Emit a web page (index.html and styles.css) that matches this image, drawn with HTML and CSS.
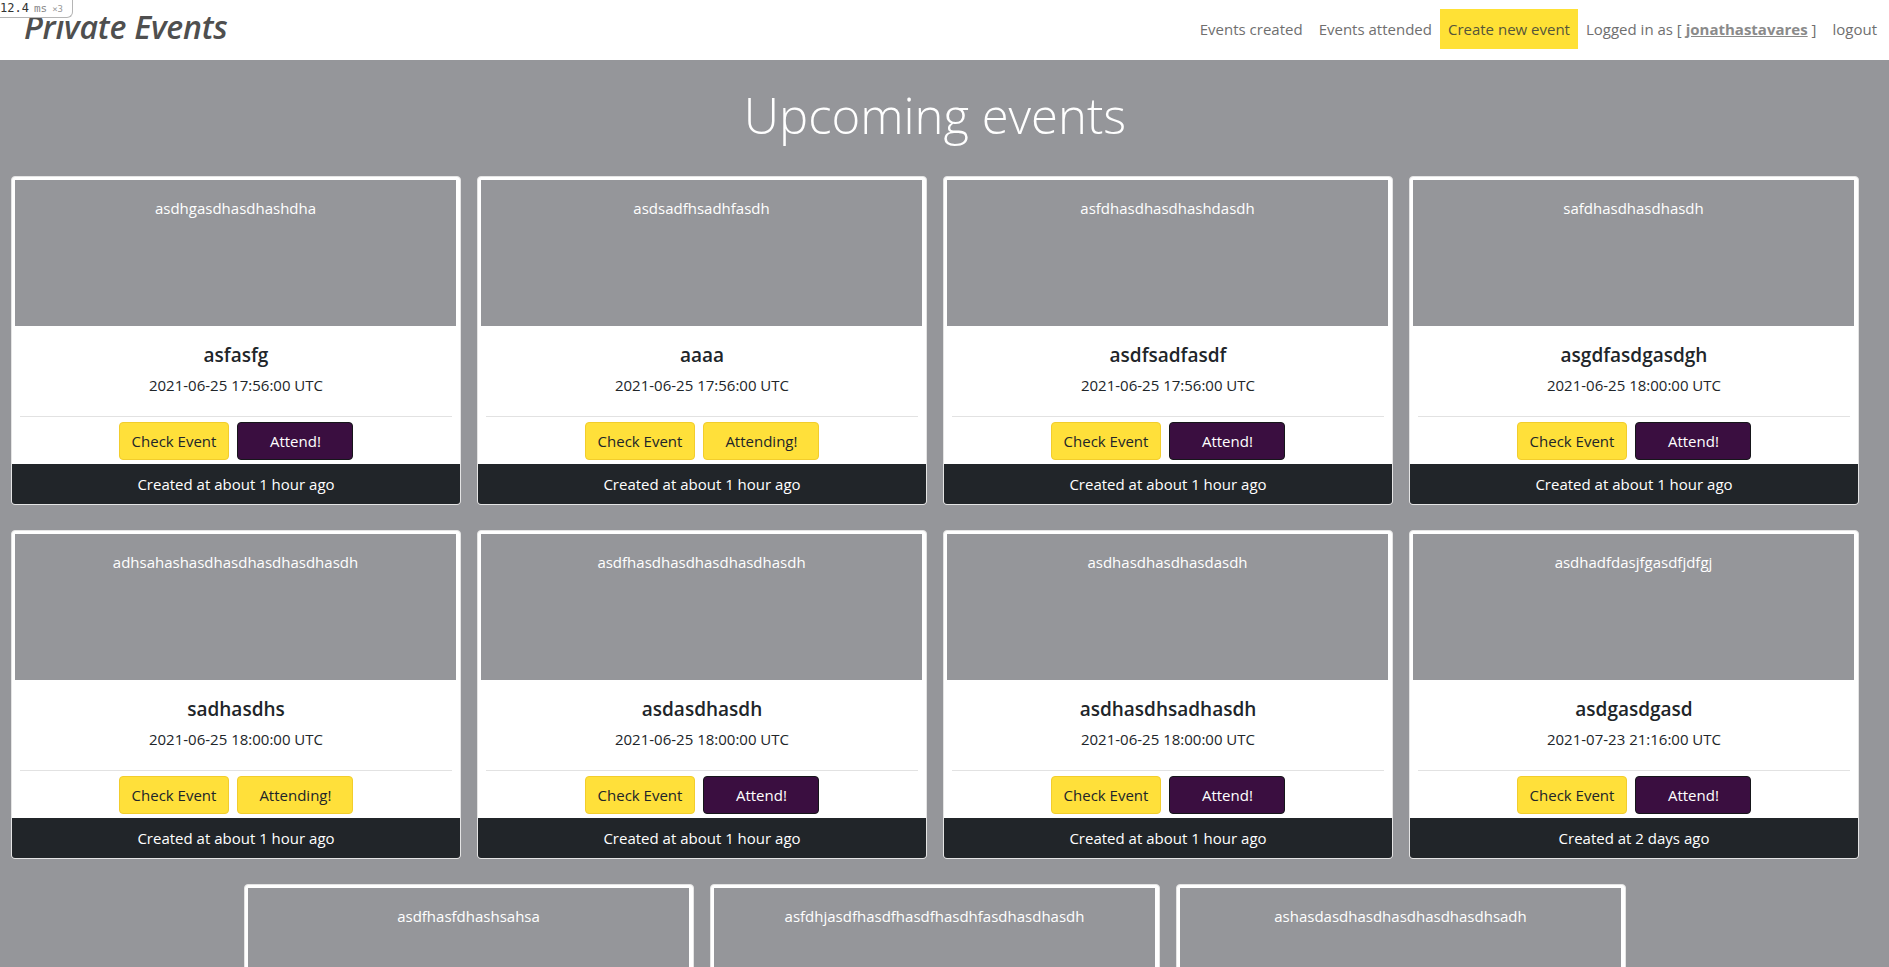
FILE: index.html
```html
<!DOCTYPE html>
<html lang="en">
<head>
<meta charset="utf-8">
<title>Private Events</title>
<link rel="stylesheet" href="styles.css">
</head>
<body>
<div class="profiler"><span class="p-num">12.4</span><span class="p-unit">ms</span><span class="p-x">×3</span></div>
<header class="navbar">
  <a class="brand" href="#">Private Events</a>
  <nav class="nav">
    <a class="nav-link" href="#">Events created</a>
    <a class="nav-link" href="#">Events attended</a>
    <a class="nav-link nav-create" href="#">Create new event</a>
    <span class="nav-link">Logged in as [ <a class="user" href="#">jonathastavares</a> ]</span>
    <a class="nav-link" href="#">logout</a>
  </nav>
</header>
<main class="main">
  <h1 class="page-title">Upcoming events</h1>
  <div class="cards">
    <article class="card">
      <div class="card-img-wrap"><div class="card-img">asdhgasdhasdhashdha</div></div>
      <div class="card-body">
        <h5 class="card-title">asfasfg</h5>
        <p class="card-date">2021-06-25 17:56:00 UTC</p>
        <hr class="card-hr">
        <div class="card-actions"><a class="btn btn-yellow" href="#">Check Event</a><a class="btn btn-wide btn-purple" href="#">Attend!</a></div>
      </div>
      <div class="card-footer">Created at about 1 hour ago</div>
    </article>
    <article class="card">
      <div class="card-img-wrap"><div class="card-img">asdsadfhsadhfasdh</div></div>
      <div class="card-body">
        <h5 class="card-title">aaaa</h5>
        <p class="card-date">2021-06-25 17:56:00 UTC</p>
        <hr class="card-hr">
        <div class="card-actions"><a class="btn btn-yellow" href="#">Check Event</a><a class="btn btn-wide btn-yellow" href="#">Attending!</a></div>
      </div>
      <div class="card-footer">Created at about 1 hour ago</div>
    </article>
    <article class="card">
      <div class="card-img-wrap"><div class="card-img">asfdhasdhasdhashdasdh</div></div>
      <div class="card-body">
        <h5 class="card-title">asdfsadfasdf</h5>
        <p class="card-date">2021-06-25 17:56:00 UTC</p>
        <hr class="card-hr">
        <div class="card-actions"><a class="btn btn-yellow" href="#">Check Event</a><a class="btn btn-wide btn-purple" href="#">Attend!</a></div>
      </div>
      <div class="card-footer">Created at about 1 hour ago</div>
    </article>
    <article class="card">
      <div class="card-img-wrap"><div class="card-img">safdhasdhasdhasdh</div></div>
      <div class="card-body">
        <h5 class="card-title">asgdfasdgasdgh</h5>
        <p class="card-date">2021-06-25 18:00:00 UTC</p>
        <hr class="card-hr">
        <div class="card-actions"><a class="btn btn-yellow" href="#">Check Event</a><a class="btn btn-wide btn-purple" href="#">Attend!</a></div>
      </div>
      <div class="card-footer">Created at about 1 hour ago</div>
    </article>
    <article class="card">
      <div class="card-img-wrap"><div class="card-img">adhsahashasdhasdhasdhasdhasdh</div></div>
      <div class="card-body">
        <h5 class="card-title">sadhasdhs</h5>
        <p class="card-date">2021-06-25 18:00:00 UTC</p>
        <hr class="card-hr">
        <div class="card-actions"><a class="btn btn-yellow" href="#">Check Event</a><a class="btn btn-wide btn-yellow" href="#">Attending!</a></div>
      </div>
      <div class="card-footer">Created at about 1 hour ago</div>
    </article>
    <article class="card">
      <div class="card-img-wrap"><div class="card-img">asdfhasdhasdhasdhasdhasdh</div></div>
      <div class="card-body">
        <h5 class="card-title">asdasdhasdh</h5>
        <p class="card-date">2021-06-25 18:00:00 UTC</p>
        <hr class="card-hr">
        <div class="card-actions"><a class="btn btn-yellow" href="#">Check Event</a><a class="btn btn-wide btn-purple" href="#">Attend!</a></div>
      </div>
      <div class="card-footer">Created at about 1 hour ago</div>
    </article>
    <article class="card">
      <div class="card-img-wrap"><div class="card-img">asdhasdhasdhasdasdh</div></div>
      <div class="card-body">
        <h5 class="card-title">asdhasdhsadhasdh</h5>
        <p class="card-date">2021-06-25 18:00:00 UTC</p>
        <hr class="card-hr">
        <div class="card-actions"><a class="btn btn-yellow" href="#">Check Event</a><a class="btn btn-wide btn-purple" href="#">Attend!</a></div>
      </div>
      <div class="card-footer">Created at about 1 hour ago</div>
    </article>
    <article class="card">
      <div class="card-img-wrap"><div class="card-img">asdhadfdasjfgasdfjdfgj</div></div>
      <div class="card-body">
        <h5 class="card-title">asdgasdgasd</h5>
        <p class="card-date">2021-07-23 21:16:00 UTC</p>
        <hr class="card-hr">
        <div class="card-actions"><a class="btn btn-yellow" href="#">Check Event</a><a class="btn btn-wide btn-purple" href="#">Attend!</a></div>
      </div>
      <div class="card-footer">Created at 2 days ago</div>
    </article>
    <article class="card">
      <div class="card-img-wrap"><div class="card-img">asdfhasfdhashsahsa</div></div>
      <div class="card-body">
        <h5 class="card-title">asdfasdf</h5>
        <p class="card-date">2021-07-23 21:16:00 UTC</p>
        <hr class="card-hr">
        <div class="card-actions"><a class="btn btn-yellow" href="#">Check Event</a><a class="btn btn-wide btn-purple" href="#">Attend!</a></div>
      </div>
      <div class="card-footer">Created at 2 days ago</div>
    </article>
    <article class="card">
      <div class="card-img-wrap"><div class="card-img">asfdhjasdfhasdfhasdfhasdhfasdhasdhasdh</div></div>
      <div class="card-body">
        <h5 class="card-title">asdfasdfasdf</h5>
        <p class="card-date">2021-07-23 21:16:00 UTC</p>
        <hr class="card-hr">
        <div class="card-actions"><a class="btn btn-yellow" href="#">Check Event</a><a class="btn btn-wide btn-purple" href="#">Attend!</a></div>
      </div>
      <div class="card-footer">Created at 2 days ago</div>
    </article>
    <article class="card">
      <div class="card-img-wrap"><div class="card-img">ashasdasdhasdhasdhasdhasdhsadh</div></div>
      <div class="card-body">
        <h5 class="card-title">asdhasdh</h5>
        <p class="card-date">2021-07-23 21:16:00 UTC</p>
        <hr class="card-hr">
        <div class="card-actions"><a class="btn btn-yellow" href="#">Check Event</a><a class="btn btn-wide btn-purple" href="#">Attend!</a></div>
      </div>
      <div class="card-footer">Created at 2 days ago</div>
    </article>
  </div>
</main>
</body>
</html>
```

FILE: styles.css
```css
html {
  overflow: hidden;
}

body {
  margin: 0;
  background: #95969a;
  font-family: "Open Sans", "Noto Sans", "Liberation Sans", sans-serif;
  font-size: 15px;
  line-height: 24px;
  color: #212529;
}

a {
  text-decoration: none;
  color: inherit;
}

/* profiler badge overlay */
.profiler {
  position: absolute;
  top: 0;
  left: 0;
  z-index: 10;
  display: flex;
  align-items: baseline;
  gap: 5px;
  height: 17px;
  padding: 0 9px 0 0;
  background: #fff;
  border: 1px solid #b5b5b5;
  border-top: 0;
  border-left: 0;
  border-bottom-right-radius: 6px;
  font-family: "DejaVu Sans Mono", "Liberation Mono", monospace;
  font-size: 12px;
  line-height: 16px;
  color: #333;
  white-space: nowrap;
}

.p-unit {
  color: #888;
  font-size: 11px;
}

.p-x {
  color: #999;
  font-size: 9px;
}

/* header */
.navbar {
  height: 60px;
  background: #fff;
  display: flex;
  justify-content: space-between;
  align-items: flex-start;
  padding: 0 4px 0 24px;
}

.brand {
  font-size: 32px;
  line-height: 40px;
  font-style: italic;
  font-weight: 600;
  color: #4f4f4f;
  padding-top: 7px;
  letter-spacing: -0.2px;
}

.nav {
  display: flex;
  align-items: center;
  padding-top: 9px;
}

.nav-link {
  display: block;
  padding: 8px 8px;
  line-height: 24px;
  color: #6f6f6f;
  white-space: nowrap;
}

.nav-create {
  background: #ffe135;
  color: #55553a;
}

.user {
  font-weight: 700;
  color: #8a8a8a;
  text-decoration: underline;
}

/* main */
.main {
  padding: 0 30px 40px 11px;
}

.page-title {
  margin: 27px 0 33px;
  text-align: center;
  color: #fff;
  font-weight: 300;
  font-size: 49px;
  line-height: 56px;
}

.cards {
  display: flex;
  flex-wrap: wrap;
  justify-content: center;
  gap: 25px 16px;
}

.card {
  width: 450px;
  box-sizing: border-box;
  background: #fff;
  border: 1px solid #e4e4e4;
  border-radius: 4px;
  display: flex;
  flex-direction: column;
}

.card-img-wrap {
  padding: 3px 4px 0 3px;
}

.card-img {
  height: 146px;
  box-sizing: border-box;
  padding-top: 16px;
  background: #95969a;
  color: #fff;
  text-align: center;
}

.card-body {
  padding: 17px 8px 4px;
  text-align: center;
}

.card-title {
  margin: 0 0 6px;
  font-size: 19px;
  line-height: 24px;
  font-weight: 600;
}

.card-date {
  margin: 0 0 19px;
  font-size: 15px;
  line-height: 24px;
}

.card-hr {
  margin: 0 0 5px;
  border: 0;
  border-top: 1px solid #e2e2e2;
}

.card-actions {
  display: flex;
  justify-content: center;
  gap: 8px;
}

.btn {
  display: inline-block;
  box-sizing: border-box;
  height: 38px;
  padding: 6px 12px;
  border: 1px solid transparent;
  border-radius: 4px;
  font-size: 15px;
  line-height: 24px;
  text-align: center;
}

.btn-wide {
  width: 116px;
}

.btn-yellow {
  background: #ffe03a;
  border-color: #f2cd2c;
  color: #212529;
}

.btn-purple {
  background: #3a0e40;
  border-color: #16161a;
  color: #fff;
}

.card-footer {
  height: 40px;
  box-sizing: border-box;
  padding: 8px;
  background: #212529;
  color: #fff;
  text-align: center;
  border-radius: 0 0 3px 3px;
}
```
